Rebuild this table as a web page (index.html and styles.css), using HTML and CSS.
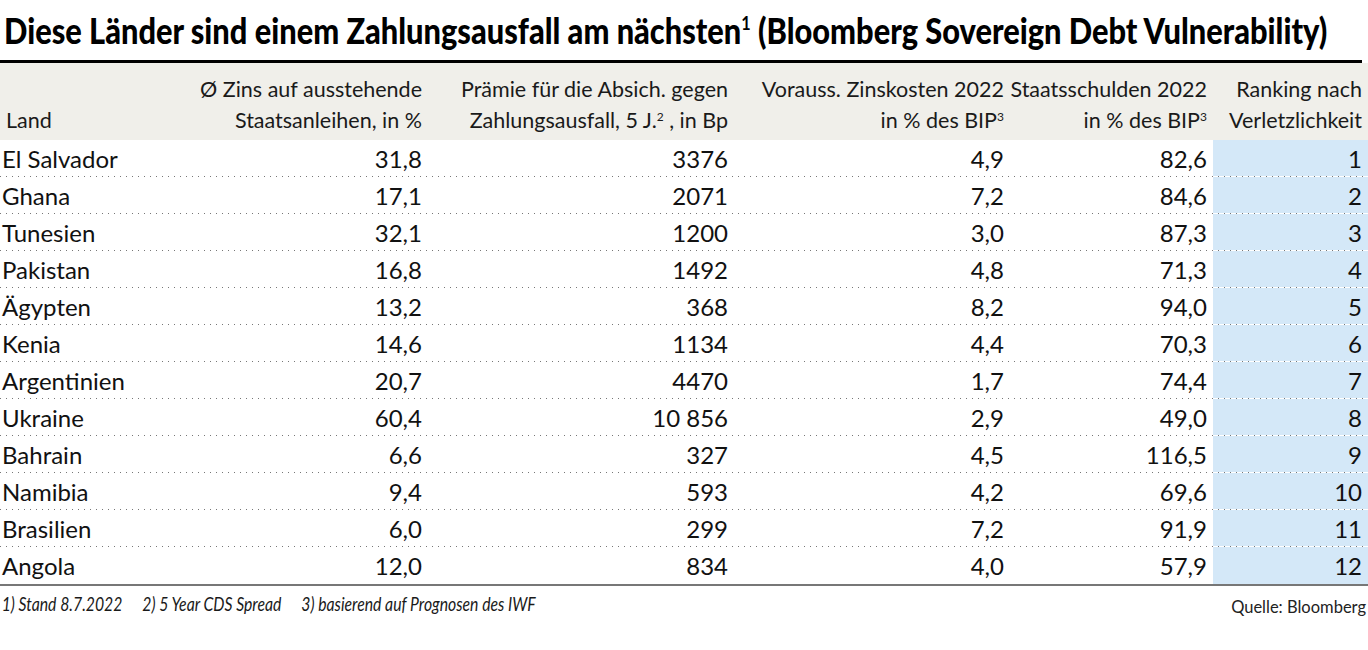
FILE: index.html
```html
<!DOCTYPE html>
<html lang="de">
<head>
<meta charset="utf-8">
<title>Zahlungsausfall</title>
<link rel="stylesheet" href="styles.css">
</head>
<body>
<div class="page">
  <h1 class="title"><span class="tt">Diese Länder sind einem Zahlungsausfall am nächsten<sup class="tsup">1</sup> (Bloomberg Sovereign Debt Vulnerability)</span></h1>
  <div class="rule"></div>
  <div class="table">
    <div class="head">
      <div class="hc left">Land</div>
      <div class="hc">Ø Zins auf ausstehende<br>Staatsanleihen, in %</div>
      <div class="hc">Prämie für die Absich. gegen<br>Zahlungsausfall, 5 J.<sup>2</sup> , in Bp</div>
      <div class="hc">Vorauss. Zinskosten 2022<br>in % des BIP<sup>3</sup></div>
      <div class="hc">Staatsschulden 2022<br>in % des BIP<sup>3</sup></div>
      <div class="hc">Ranking nach<br>Verletzlichkeit</div>
    </div>
    <div class="row"><div class="c left">El Salvador</div><div class="c">31,8</div><div class="c">3376</div><div class="c">4,9</div><div class="c">82,6</div><div class="c rank">1</div></div>
    <div class="row"><div class="c left">Ghana</div><div class="c">17,1</div><div class="c">2071</div><div class="c">7,2</div><div class="c">84,6</div><div class="c rank">2</div></div>
    <div class="row"><div class="c left">Tunesien</div><div class="c">32,1</div><div class="c">1200</div><div class="c">3,0</div><div class="c">87,3</div><div class="c rank">3</div></div>
    <div class="row"><div class="c left">Pakistan</div><div class="c">16,8</div><div class="c">1492</div><div class="c">4,8</div><div class="c">71,3</div><div class="c rank">4</div></div>
    <div class="row"><div class="c left">Ägypten</div><div class="c">13,2</div><div class="c">368</div><div class="c">8,2</div><div class="c">94,0</div><div class="c rank">5</div></div>
    <div class="row"><div class="c left">Kenia</div><div class="c">14,6</div><div class="c">1134</div><div class="c">4,4</div><div class="c">70,3</div><div class="c rank">6</div></div>
    <div class="row"><div class="c left">Argentinien</div><div class="c">20,7</div><div class="c">4470</div><div class="c">1,7</div><div class="c">74,4</div><div class="c rank">7</div></div>
    <div class="row"><div class="c left">Ukraine</div><div class="c">60,4</div><div class="c">10 856</div><div class="c">2,9</div><div class="c">49,0</div><div class="c rank">8</div></div>
    <div class="row"><div class="c left">Bahrain</div><div class="c">6,6</div><div class="c">327</div><div class="c">4,5</div><div class="c">116,5</div><div class="c rank">9</div></div>
    <div class="row"><div class="c left">Namibia</div><div class="c">9,4</div><div class="c">593</div><div class="c">4,2</div><div class="c">69,6</div><div class="c rank">10</div></div>
    <div class="row"><div class="c left">Brasilien</div><div class="c">6,0</div><div class="c">299</div><div class="c">7,2</div><div class="c">91,9</div><div class="c rank">11</div></div>
    <div class="row last"><div class="c left">Angola</div><div class="c">12,0</div><div class="c">834</div><div class="c">4,0</div><div class="c">57,9</div><div class="c rank">12</div></div>
  </div>
  <div class="foot">
    <div class="notes"><span>1) Stand 8.7.2022</span><span>2) 5 Year CDS Spread</span><span>3) basierend auf Prognosen des IWF</span></div>
    <div class="source">Quelle: Bloomberg</div>
  </div>
</div>
</body>
</html>
```
FILE: styles.css
```css
html, body {
  margin: 0;
  padding: 0;
  background: #ffffff;
}
.page {
  width: 1368px;
  font-family: Lato, "Open Sans", sans-serif;
  color: #111;
  overflow: hidden;
}
.title {
  margin: 0;
  padding: 12px 0 0 4px;
  height: 48px;
  box-sizing: border-box;
  font-family: Lato, sans-serif;
  font-weight: 900;
  font-size: 36px;
  line-height: 36px;
  color: #000;
  white-space: nowrap;
}
.tt {
  display: inline-block;
  transform: scaleX(0.855);
  transform-origin: 0 50%;
}
.tsup {
  font-size: 19px;
  font-weight: 700;
  vertical-align: 14px;
  line-height: 0;
}
.rule {
  margin-top: 12px;
  width: 1362px;
  height: 3px;
  background: #000;
}
.table {
  display: flex;
  flex-direction: column;
}
.head, .row {
  display: grid;
  grid-template-columns: 200px 228px 306px 276px 203px 155px;
}
.head {
  background: #f0efea;
  height: 77px;
  align-items: end;
  padding-bottom: 4px;
  box-sizing: border-box;
}
.hc {
  font-size: 21.5px;
  line-height: 31px;
  text-align: right;
  padding-right: 6px;
  color: #1a1a1a;
  white-space: nowrap;
}
.hc.left {
  text-align: left;
  padding-left: 6px;
}
.hc sup {
  font-size: 12px;
  vertical-align: 7px;
  line-height: 0;
}
.row {
  height: 37px;
  background-image: repeating-linear-gradient(to right, #777 0 1px, transparent 1px 6px);
  background-size: 100% 1px;
  background-position: 0 100%;
  background-repeat: no-repeat;
}
.row.last {
  background-image: none;
  border-bottom: 2px solid #777;
}
.c {
  font-size: 24px;
  line-height: 36px;
  padding-top: 1px;
  text-align: right;
  padding-right: 6px;
  height: 36px;
  box-sizing: border-box;
}
.c.left {
  text-align: left;
  padding-left: 2px;
}
.c.rank {
  background: #d4e8f8;
}
.row.last .c {
  height: 37px;
}
.foot {
  display: flex;
  justify-content: space-between;
  align-items: flex-start;
  padding-top: 6px;
}
.notes {
  display: flex;
  gap: 24px;
  font-family: Lato, sans-serif;
  font-style: italic;
  font-size: 19px;
  padding-left: 2px;
  color: #1a1a1a;
  transform: scaleX(0.83);
  transform-origin: 0 50%;
  white-space: nowrap;
}
.source {
  font-size: 16.5px;
  padding-right: 2px;
  padding-top: 5px;
  color: #222;
}
```
